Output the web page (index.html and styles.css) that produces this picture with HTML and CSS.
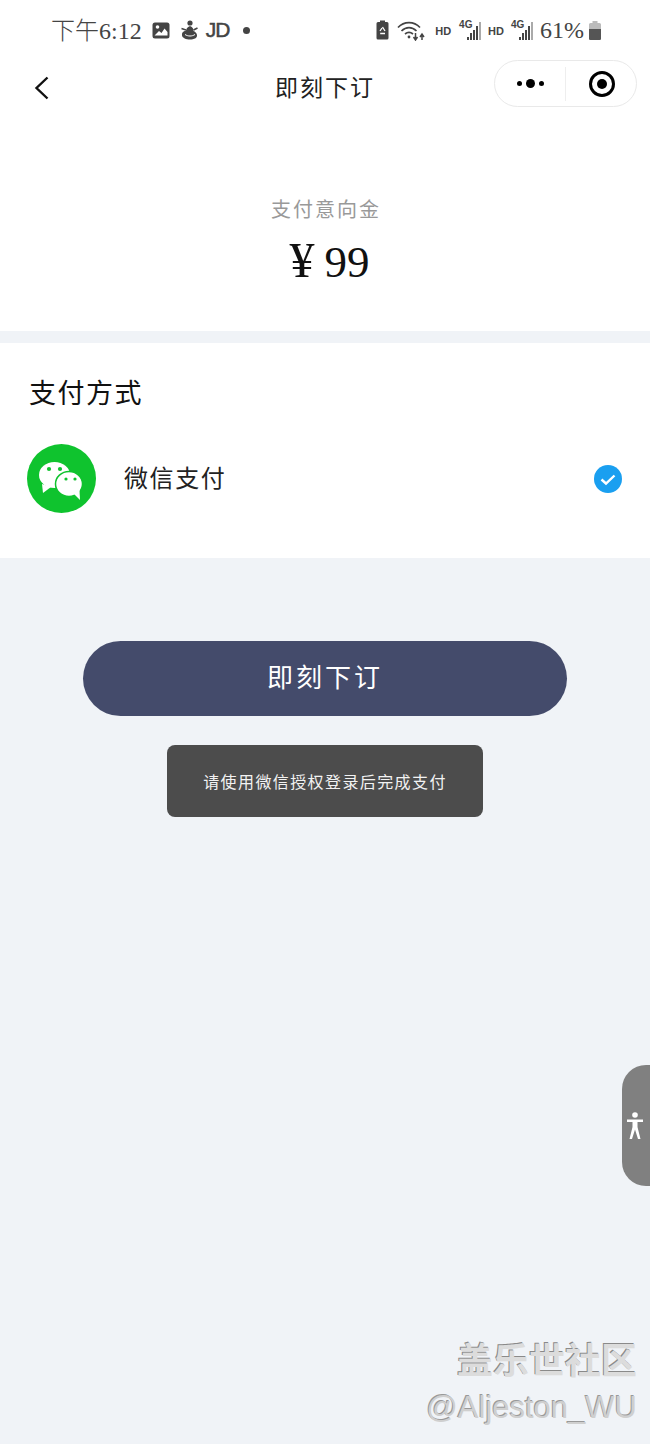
FILE: index.html
```html
<!DOCTYPE html>
<html>
  <head>
    <meta charset="utf-8" />
    <title>即刻下订</title>
    <link rel="stylesheet" href="styles.css">
  </head>
  <body>
    <div class="page">
      <div class="status-bar">
        <div class="status-left">
          <span class="status-time">下午6:12</span>
          <svg class="icon-pic" width="18" height="17" viewBox="0 0 18 17">
            <rect x="0.5" y="0.5" width="17" height="16" rx="2.5" fill="#444" />
            <circle cx="5.5" cy="5" r="1.8" fill="#fff" />
            <path d="M2.5 13.5 L7 9 L9.5 11 L12.5 6.5 L15.5 10 V13.5 Z" fill="#fff" />
          </svg>
          <svg class="icon-app" width="17" height="20" viewBox="0 0 17 20">
            <circle cx="9" cy="3" r="2.6" fill="#444" />
            <path d="M9 6 C6 7 5.5 9 5 10.5 C2 11 0.5 13 1 15.5 C1.5 18 5 19.5 9 19.5 C13 19.5 16.5 18 16 15 C15.7 13 14 11.5 12.5 11 C12.5 9 12 7 9 6 Z" fill="#444" />
            <path d="M0.5 8.5 L5 10 M16.5 8 L12.5 10" stroke="#444" stroke-width="1.6" />
            <path d="M4 14.5 C7 16.5 11 16.5 14 14.5" stroke="#fff" stroke-width="1" fill="none" />
          </svg>
          <span class="status-jd">JD</span>
          <span class="status-dot"></span>
        </div>
        <div class="status-right">
          <svg class="icon-saver" width="13" height="20" viewBox="0 0 13 20">
            <path d="M4 0.5 H9 V2 H11 Q12.5 2 12.5 3.5 V18 Q12.5 19.5 11 19.5 H2 Q0.5 19.5 0.5 18 V3.5 Q0.5 2 2 2 H4 Z" fill="#444" />
            <path d="M6.5 7 L9 11 M4 11 L6 8 M4.2 13.5 H9" stroke="#fff" stroke-width="1.3" fill="none" />
          </svg>
          <svg class="icon-wifi" width="28" height="21" viewBox="0 0 28 21">
            <path d="M1 7.5 C7 1 17 1 23 7.5" stroke="#444" stroke-width="1.7" fill="none" />
            <path d="M4.5 11 C9 6.5 15 6.5 19.5 11" stroke="#444" stroke-width="1.7" fill="none" />
            <path d="M8 14 C10.5 12 13.5 12 16 14" stroke="#444" stroke-width="1.7" fill="none" />
            <circle cx="12" cy="17" r="1.4" fill="#444" />
            <path d="M18.5 13 V19 M16.5 17 L18.5 20 L20.5 17" stroke="#444" stroke-width="1.5" fill="none" />
            <path d="M25 20 V15 M23 17 L25 14 L27 17" stroke="#444" stroke-width="1.5" fill="none" />
          </svg>
          <span class="status-hd first-hd">HD</span>
          <div class="signal">
            <span class="signal-4g">4G</span>
            <div class="signal-bars">
              <i class="bar-1"></i><i class="bar-2"></i><i class="bar-3"></i><i class="bar-4"></i><i class="bar-5"></i>
            </div>
          </div>
          <span class="status-hd">HD</span>
          <div class="signal">
            <span class="signal-4g">4G</span>
            <div class="signal-bars">
              <i class="bar-1"></i><i class="bar-2"></i><i class="bar-3"></i><i class="bar-4"></i><i class="bar-5"></i>
            </div>
          </div>
          <span class="status-battery">61%</span>
          <svg class="icon-battery" width="12" height="19" viewBox="0 0 12 19">
            <path d="M3.5 0 H8.5 V2 H10.5 Q12 2 12 3.5 V17.5 Q12 19 10.5 19 H1.5 Q0 19 0 17.5 V3.5 Q0 2 1.5 2 H3.5 Z" fill="#bbb" />
            <path d="M0 8 H12 V17.5 Q12 19 10.5 19 H1.5 Q0 19 0 17.5 Z" fill="#555" />
          </svg>
        </div>
      </div>

      <div class="nav-bar">
        <svg class="nav-back" width="16" height="24" viewBox="0 0 16 24">
          <path d="M13.5 1.5 L2.5 12 L13.5 22.5" stroke="#111" stroke-width="2.4" fill="none" />
        </svg>
        <span class="nav-title">即刻下订</span>
        <div class="capsule">
          <div class="capsule-more">
            <i class="dot-small"></i><i class="dot-big"></i><i class="dot-small"></i>
          </div>
          <div class="capsule-line"></div>
          <svg class="capsule-close" width="28" height="28" viewBox="0 0 28 28">
            <circle cx="14" cy="14" r="11.5" stroke="#000" stroke-width="3" fill="none" />
            <circle cx="14" cy="14" r="5" fill="#000" />
          </svg>
        </div>
      </div>

      <div class="amount-card">
        <p class="amount-label">支付意向金</p>
        <p class="amount-value"><span class="amount-yen">¥</span>99</p>
      </div>

      <div class="pay-card">
        <h2 class="pay-title">支付方式</h2>
        <div class="pay-row">
          <svg class="pay-icon" width="69" height="69" viewBox="0 0 69 69">
            <circle cx="34.5" cy="34.5" r="34.5" fill="#0fc32e" />
            <ellipse cx="27.5" cy="31" rx="15.5" ry="13" fill="#fff" />
            <path d="M15 40 L16 49 L24 43 Z" fill="#fff" />
            <ellipse cx="42" cy="40" rx="13.5" ry="12.5" fill="#fff" stroke="#0fc32e" stroke-width="1.5" />
            <path d="M47 50 L53 56 L52.5 46 Z" fill="#fff" />
            <circle cx="22" cy="25" r="2.1" fill="#0fc32e" />
            <circle cx="33" cy="25" r="2.1" fill="#0fc32e" />
            <circle cx="39" cy="35" r="1.6" fill="#0fc32e" />
            <circle cx="48" cy="35" r="1.6" fill="#0fc32e" />
          </svg>
          <span class="pay-name">微信支付</span>
          <svg class="pay-check" width="28" height="28" viewBox="0 0 28 28">
            <circle cx="14" cy="14" r="14" fill="#1a9ff0" />
            <path d="M7.5 14.5 L12 18.5 L20.5 10.5" stroke="#fff" stroke-width="2.4" fill="none" />
          </svg>
        </div>
      </div>

      <div class="actions">
        <div class="order-btn">即刻下订</div>
        <div class="toast">请使用微信授权登录后完成支付</div>
      </div>

      <div class="side-tab">
        <svg width="18" height="28" viewBox="0 0 18 28">
          <circle cx="9" cy="3" r="2.8" fill="#fff" />
          <path d="M1 7.5 H17 V10 H11.5 V15 L14.5 27 H12 L9 17.5 L6 27 H3.5 L6.5 15 V10 H1 Z" fill="#fff" />
        </svg>
      </div>

      <div class="watermark">
        <div class="watermark-name">盖乐世社区</div>
        <div class="watermark-user">@Aljeston_WU</div>
      </div>
    </div>
  </body>
</html>
```

FILE: styles.css
```css
html {
  background-color: #f0f3f7;
}

body {
  margin: 0;
  padding: 0;
  font-family: "Liberation Serif", "Noto Sans CJK SC", serif;
  background-color: #f0f3f7;
}

p,
h2 {
  margin: 0;
  font-weight: normal;
}

.page {
  position: relative;
  width: 650px;
  height: 1444px;
  overflow: hidden;
}

/* status bar */
.status-bar {
  display: flex;
  justify-content: space-between;
  align-items: center;
  height: 60px;
  padding: 0 49px 0 51px;
  background-color: #fff;
  color: #444;
  box-sizing: border-box;
}

.status-left,
.status-right {
  display: flex;
  align-items: center;
}

.status-time {
  font-size: 24px;
  font-weight: 300;
  margin-right: 10px;
  margin-bottom: 4px;
}

.icon-app {
  margin-left: 11px;
}

.status-jd {
  font-family: "Liberation Sans", sans-serif;
  font-size: 21px;
  letter-spacing: -1px;
  -webkit-text-stroke: 0.5px #444;
  margin-left: 8px;
}

.status-dot {
  width: 7px;
  height: 7px;
  margin-left: 14px;
  border-radius: 50%;
  background-color: #444;
}

.icon-wifi {
  margin-left: 8px;
}

.status-hd {
  font-family: "Liberation Sans", sans-serif;
  font-size: 11px;
  font-weight: bold;
  margin-right: 7px;
  margin-top: 1px;
}

.first-hd {
  margin-left: 10px;
  margin-right: 8px;
}

.signal {
  display: flex;
  align-items: flex-end;
  position: relative;
  width: 22px;
  height: 20px;
  margin-right: 7px;
  justify-content: flex-end;
}

.signal-4g {
  position: absolute;
  left: 0;
  top: -1px;
  font-family: "Liberation Sans", sans-serif;
  font-size: 10px;
  font-weight: bold;
}

.signal-bars {
  display: flex;
  align-items: flex-end;
  gap: 1px;
}

.signal-bars i {
  display: block;
  width: 2px;
  background-color: #444;
}

.bar-1 { height: 3px; }
.bar-2 { height: 7px; }
.bar-3 { height: 10px; }
.bar-4 { height: 14px; }
.bar-5 { height: 18px; background-color: #aaa !important; }

.status-battery {
  font-size: 24px;
  margin-left: 0;
  margin-right: 5px;
}

/* nav bar */
.nav-bar {
  display: grid;
  grid-template-columns: 1fr auto 1fr;
  align-items: center;
  height: 47px;
  padding: 0 13px;
  background-color: #fff;
}

.nav-back {
  margin-left: 21px;
  margin-top: 8px;
}

.nav-title {
  margin-top: 4px;
  font-size: 23px;
  letter-spacing: 2px;
  color: #222;
}

.capsule {
  justify-self: end;
  display: flex;
  align-items: center;
  width: 143px;
  height: 47px;
  box-sizing: border-box;
  border: 1px solid #e9e9e9;
  border-radius: 24px;
  background-color: #fff;
}

.capsule-more {
  display: flex;
  align-items: center;
  justify-content: center;
  gap: 4px;
  width: 70px;
}

.capsule-more i {
  display: block;
  border-radius: 50%;
  background-color: #000;
}

.dot-small {
  width: 5px;
  height: 5px;
}

.dot-big {
  width: 9px;
  height: 9px;
}

.capsule-line {
  width: 1px;
  height: 34px;
  background-color: #eee;
}

.capsule-close {
  margin-left: 22px;
}

/* amount */
.amount-card {
  height: 224px;
  box-sizing: border-box;
  padding-top: 89px;
  background-color: #fff;
  text-align: center;
}

.amount-label {
  font-size: 20px;
  line-height: 28px;
  letter-spacing: 2px;
  color: #999;
  padding-left: 2px;
}

.amount-value {
  margin-top: 7px;
  font-size: 45px;
  line-height: 58px;
  color: #111;
  padding-left: 9px;
}

.amount-yen {
  margin-right: 10px;
  font-size: 50px;
}

/* pay method */
.pay-card {
  height: 215px;
  margin-top: 12px;
  box-sizing: border-box;
  padding: 32px 28px 0 27px;
  background-color: #fff;
}

.pay-title {
  font-size: 27px;
  line-height: 38px;
  letter-spacing: 1.5px;
  color: #111;
  padding-left: 2px;
}

.pay-row {
  display: flex;
  align-items: center;
  margin-top: 31px;
}

.pay-name {
  flex: 1;
  margin-left: 28px;
  margin-bottom: 4px;
  font-size: 24px;
  letter-spacing: 1.6px;
  color: #222;
}

/* button + toast */
.actions {
  display: flex;
  flex-direction: column;
  align-items: center;
  padding-top: 83px;
}

.order-btn {
  width: 484px;
  height: 75px;
  line-height: 75px;
  border-radius: 38px;
  background-color: #444b6b;
  color: #fff;
  font-size: 26px;
  letter-spacing: 3px;
  text-align: center;
}

.toast {
  width: 316px;
  height: 72px;
  margin-top: 29px;
  line-height: 75px;
  border-radius: 8px;
  background-color: #4c4c4c;
  color: #f2f2f2;
  font-size: 16px;
  letter-spacing: 1.4px;
  text-align: center;
}

/* floating things */
.side-tab {
  position: absolute;
  top: 1065px;
  right: 0;
  display: flex;
  align-items: center;
  width: 28px;
  height: 121px;
  padding-left: 4px;
  box-sizing: border-box;
  border-radius: 24px 0 0 24px;
  background-color: #808080;
}

.watermark {
  position: absolute;
  right: 13px;
  top: 1339px;
  text-align: right;
  font-family: "Liberation Sans", "Noto Sans CJK SC", sans-serif;
}

.watermark-name {
  font-size: 36px;
  line-height: 46px;
  font-weight: bold;
  color: #dcdcdc;
  text-shadow: -1px -1px 0 #8a8a8a;
}

.watermark-user {
  font-size: 31px;
  line-height: 45px;
  color: #cfcfcf;
  text-shadow: -1px -1px 0 #999;
}
```
